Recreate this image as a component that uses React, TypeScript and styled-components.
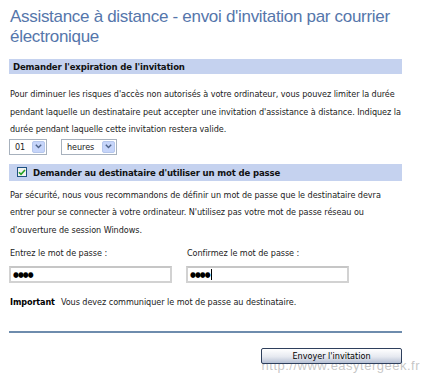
import styled, { createGlobalStyle } from 'styled-components';

const GlobalStyle = createGlobalStyle`
  html, body {
    margin: 0;
    padding: 0;
    background: #fff;
  }
  body {
    font-family: "DejaVu Sans Condensed", "DejaVu Sans", sans-serif;
    font-size: 9px;
    letter-spacing: -0.05px;
    color: #1a1a1a;
  }
`;

const Page = styled.div`
  width: 424px;
  height: 374px;
  overflow: hidden;
  position: relative;
  box-sizing: border-box;
  padding: 7px 19px 0 9px;
`;

const Title = styled.h1`
  margin: 0 0 0 1px;
  font-family: "Liberation Sans", Arial, sans-serif;
  font-weight: normal;
  font-size: 17px;
  letter-spacing: -0.3px;
  line-height: 20px;
  color: #5576ab;
`;

const SectionBar = styled.div<{ $top: number; $h: number; $pad: number }>`
  margin: ${(p) => p.$top}px 3px 0 0;
  height: ${(p) => p.$h}px;
  background: #c5d2ef;
  display: flex;
  align-items: center;
  gap: 5px;
  padding-left: ${(p) => p.$pad}px;
  font-weight: bold;
  font-size: 9.5px;
  letter-spacing: -0.15px;
  color: #111;
`;

const Text = styled.p`
  margin: 0 0 0 1px;
  line-height: 17.5px;
  color: #222;
`;

const FirstText = styled(Text)`
  margin-top: 12px;
`;

const SecondText = styled(Text)`
  margin-top: 6px;
`;

const SelectRow = styled.div`
  display: flex;
  gap: 14px;
`;

const FakeSelect = styled.div<{ $w: number }>`
  width: ${(p) => p.$w}px;
  height: 16px;
  box-sizing: border-box;
  border: 1px solid #a7b1bd;
  display: flex;
  align-items: center;
  justify-content: space-between;
  padding: 1px 1px 1px 5px;
  background: #fff;
  color: #222;
`;

const Arrow = styled.div`
  width: 13px;
  height: 12px;
  box-sizing: border-box;
  border: 1px solid #b6c7ec;
  background: #c6d5fa;
  border-radius: 2px;
  display: flex;
  align-items: center;
  justify-content: center;
`;

const Check = styled.div`
  width: 10px;
  height: 10px;
  box-sizing: border-box;
  border: 1px solid #1d5180;
  background: #f2f2ee;
  display: flex;
  align-items: center;
  justify-content: center;
`;

const BarLabel = styled.span`
  margin-left: 1px;
`;

const Fields = styled.div`
  display: grid;
  grid-template-columns: 163px 163px;
  column-gap: 14px;
  margin-top: 7px;
`;

const Label = styled.div`
  line-height: 14px;
  margin-left: 1px;
  color: #222;
`;

const Field = styled.div`
  margin-top: 6px;
  height: 17px;
  box-sizing: border-box;
  border: 2px solid #d2d2d2;
  border-top-color: #c6c6c6;
  display: flex;
  align-items: center;
  padding-left: 2px;
  font-size: 7.5px;
  letter-spacing: -1px;
  color: #000;
`;

const Caret = styled.span`
  display: inline-block;
  width: 1px;
  height: 11px;
  background: #000;
  margin-left: 1px;
`;

const Note = styled.div`
  margin-top: 12px;
  margin-left: 1px;
  line-height: 14px;
  color: #222;
  b {
    margin-right: 6px;
    color: #000;
    letter-spacing: -0.1px;
  }
`;

const Divider = styled.hr`
  margin: 22px 3px 0 0;
  border: none;
  height: 2px;
  background: #6e8cad;
`;

const Footer = styled.div`
  position: relative;
  display: flex;
  justify-content: flex-end;
  margin-top: 15px;
  padding-right: 3px;
`;

const Button = styled.button`
  position: relative;
  z-index: 1;
  width: 141px;
  height: 16px;
  border: 1px solid #2e3f5c;
  border-radius: 2px;
  background: linear-gradient(#ffffff, #e6e9f0 55%, #b6c0d4);
  font-family: inherit;
  font-size: 9px;
  color: #000;
  padding: 0 0 1px;
`;

const Watermark = styled.div`
  position: absolute;
  right: 4px;
  bottom: 1px;
  font-family: "Liberation Sans", Arial, sans-serif;
  font-size: 13px;
  letter-spacing: 0.5px;
  color: rgba(140, 140, 140, 0.5);
`;

const ChevronDown = () => (
  <svg width="7" height="5" viewBox="0 0 7 5">
    <path d="M0.8 0.8 L3.5 3.5 L6.2 0.8" fill="none" stroke="#4d6185" strokeWidth="1.4" />
  </svg>
);

const CheckMark = () => (
  <svg width="8" height="7" viewBox="0 0 8 7">
    <path d="M1 3.3 L3 5.3 L7 1" fill="none" stroke="#21a121" strokeWidth="1.6" />
  </svg>
);

const App = () => {
  return (
    <>
      <GlobalStyle />
      <Page>
        <Title>Assistance à distance - envoi d'invitation par courrier électronique</Title>

        <SectionBar $top={12} $h={15} $pad={4}>
          Demander l'expiration de l'invitation
        </SectionBar>
        <FirstText>
          Pour diminuer les risques d'accès non autorisés à votre ordinateur, vous pouvez limiter la durée
          pendant laquelle un destinataire peut accepter une invitation d'assistance à distance. Indiquez la
          durée pendant laquelle cette invitation restera valide.
        </FirstText>
        <SelectRow>
          <FakeSelect $w={38}>
            01
            <Arrow>
              <ChevronDown />
            </Arrow>
          </FakeSelect>
          <FakeSelect $w={56}>
            heures
            <Arrow>
              <ChevronDown />
            </Arrow>
          </FakeSelect>
        </SelectRow>

        <SectionBar $top={9} $h={17} $pad={8}>
          <Check>
            <CheckMark />
          </Check>
          <BarLabel>Demander au destinataire d'utiliser un mot de passe</BarLabel>
        </SectionBar>
        <SecondText>
          Par sécurité, nous vous recommandons de définir un mot de passe que le destinataire devra entrer
          pour se connecter à votre ordinateur. N'utilisez pas votre mot de passe réseau ou d'ouverture de
          session Windows.
        </SecondText>

        <Fields>
          <Label>Entrez le mot de passe :</Label>
          <Label>Confirmez le mot de passe :</Label>
          <Field>●●●●</Field>
          <Field>
            ●●●●
            <Caret />
          </Field>
        </Fields>

        <Note>
          <b>Important</b>
          Vous devez communiquer le mot de passe au destinataire.
        </Note>

        <Divider />

        <Footer>
          <Button>Envoyer l'invitation</Button>
        </Footer>
        <Watermark>http://www.easytergeek.fr</Watermark>
      </Page>
    </>
  );
};

export default App;
